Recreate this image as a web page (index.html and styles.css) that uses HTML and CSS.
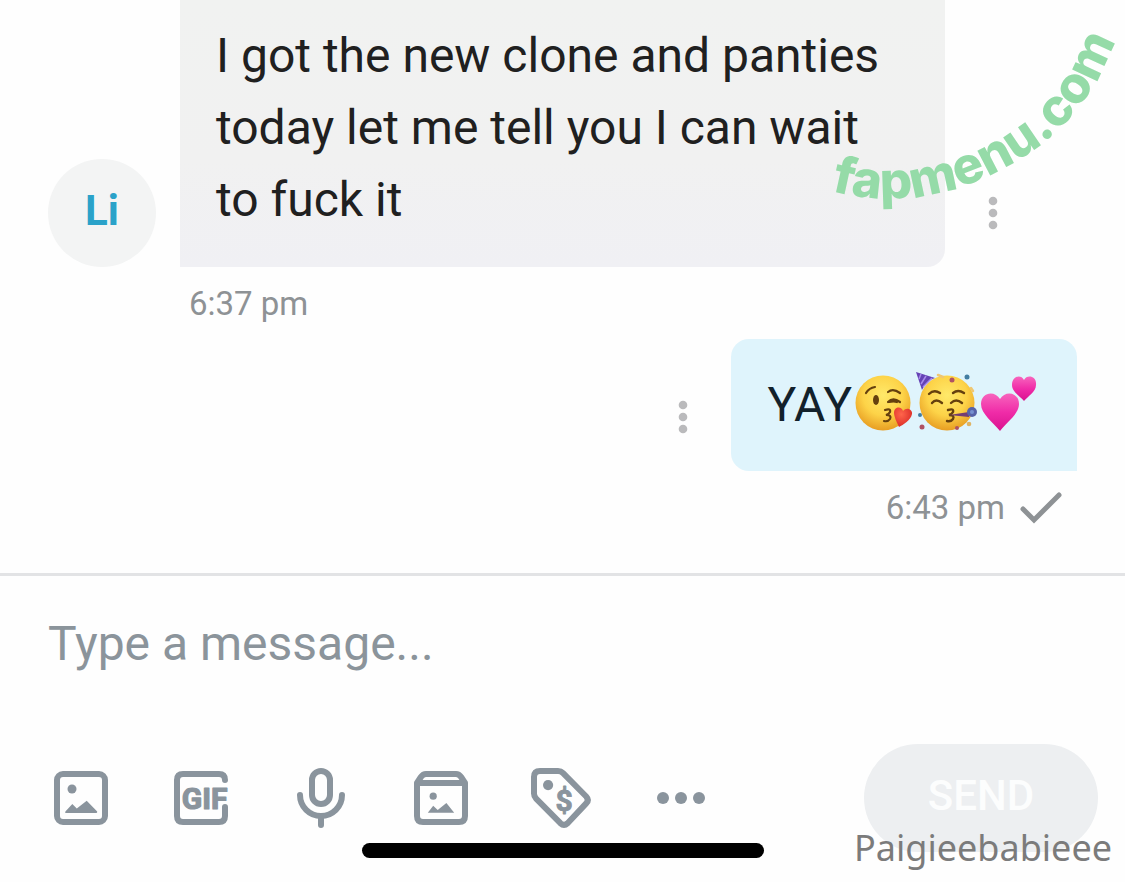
FILE: index.html
```html
<!DOCTYPE html>
<html lang="en">
<head>
<meta charset="utf-8">
<meta name="viewport" content="width=device-width, initial-scale=1">
<title>Messages</title>
<link rel="stylesheet" href="styles.css">
</head>
<body>
<main class="chat">
  <section class="thread">
    <article class="message">
      <div class="message-row">
        <div class="avatar">Li</div>
        <p class="bubble bubble-in">I got the new clone and panties today let me tell you I can wait to fuck it</p>
        <button class="more" type="button" aria-label="Message options">
          <svg width="36" height="36" viewBox="0 0 36 36"><circle cx="18" cy="6" r="4.300"/><circle cx="18" cy="18" r="4.300"/><circle cx="18" cy="30" r="4.300"/></svg>
        </button>
      </div>
      <div class="meta meta-in"><time>6:37 pm</time></div>
    </article>
    <article class="message">
      <div class="message-row message-row-out">
        <button class="more" type="button" aria-label="Message options">
          <svg width="36" height="36" viewBox="0 0 36 36"><circle cx="18" cy="6" r="4.300"/><circle cx="18" cy="18" r="4.300"/><circle cx="18" cy="30" r="4.300"/></svg>
        </button>
        <p class="bubble bubble-out"><span>YAY</span>
          <svg class="emoji" viewBox="0 0 63 63" role="img" aria-label="Face blowing a kiss">
            <defs>
              <radialGradient id="face" cx=".5" cy=".36" r=".66"><stop offset="0" stop-color="#ffe96a"/><stop offset=".55" stop-color="#fdd348"/><stop offset="1" stop-color="#e69a20"/></radialGradient>
              <linearGradient id="pink" x2="0" y2="1"><stop offset="0" stop-color="#f765bd"/><stop offset=".5" stop-color="#f02ca8"/><stop offset="1" stop-color="#d9128f"/></linearGradient>
              <radialGradient id="red" cx=".4" cy=".35" r=".7"><stop offset="0" stop-color="#ff654b"/><stop offset="1" stop-color="#d92a25"/></radialGradient>
            </defs>
            <circle cx="31" cy="32" r="27.500" fill="url(#face)"/>
            <g fill="none" stroke="#65400e" stroke-width="2.200" stroke-linecap="round">
              <path d="M14 22Q17 17 23 16M36 21Q41 17 48 22M36 31Q41 26 48 31M37 31Q42 30 45 31"/>
              <path d="M33 39Q39 37 38 41Q37 43 34 44Q40 44 38 48Q36 51 32 50"/>
            </g>
            <ellipse cx="24" cy="29" rx="3" ry="5" fill="#65400e"/>
            <path d="M47 56Q42 46 42 42C42 35 50 35 51 40C55 35 61 39 60 43C59 49 51 54 47 56Z" fill="url(#red)"/>
          </svg>
          <svg class="emoji" viewBox="0 0 63 63" role="img" aria-label="Partying face">
            <circle cx="32" cy="32" r="27.500" fill="url(#face)"/>
            <g fill="none" stroke="#65400e" stroke-width="2.400" stroke-linecap="round">
              <path d="M14 23Q19 18 25 22M38 22Q43 18 49 22M17 32Q21 27 27 32M36 32Q41 27 47 32"/>
              <path d="M33 39Q39 37 38 41Q37 43 34 44Q40 44 38 48Q36 51 32 50"/>
            </g>
            <path d="M1 1L20 7Q12 9 7 19Z" fill="#6542b5"/>
            <path d="M6 3L4 8M11 5L6 13M17 7L8 16" stroke="#a88bea" stroke-width="1.500"/>
            <path d="M34 44L54 41V46Z" fill="#743d72"/><circle cx="57" cy="41" r="5" fill="#5763a8"/><circle cx="57" cy="41" r="2" fill="#7790cf"/>
            <g fill="#af5263"><circle cx="37" cy="9" r="2.500"/><circle cx="7" cy="56" r="2.500"/><circle cx="42" cy="57" r="2"/></g>
            <g fill="#427da1"><circle cx="52" cy="6" r="2.500"/><circle cx="5" cy="44" r="2"/></g>
            <path d="M23 4L28 6M56 17L58 20" stroke="#efc773" stroke-width="2.500" stroke-linecap="round"/><circle cx="54" cy="53" r="2.300" fill="#dfb464"/>
          </svg>
          <svg class="emoji" viewBox="0 0 63 63" role="img" aria-label="Two hearts">
            <path d="M22 60C15 51 3 43 3 33C3 21 17 19 22 28C27 19 41 21 41 33C41 43 29 51 22 60Z" fill="url(#pink)"/>
            <path d="M46 30C42 25 34 21 34 14C34 5 43 3 46 9C49 3 59 5 58 14C58 21 50 25 46 30Z" fill="url(#pink)"/>
          </svg>
        </p>
      </div>
      <div class="meta meta-out"><time>6:43 pm</time>
        <svg class="check" viewBox="0 0 42 32" role="img" aria-label="Sent"><path d="M3 17L14 28L39 3"/></svg>
      </div>
    </article>
  </section>
  <form class="composer">
    <textarea class="entry" rows="1" aria-label="Message" placeholder="Type a message..."></textarea>
    <div class="toolbar">
      <div class="tools">
        <button class="tool" type="button" aria-label="Add photo"><svg viewBox="0 0 24 24"><rect class="line" x="4" y="4" width="16" height="16" rx="2"/><circle cx="9" cy="9" r="1.500"/><path d="M7 17Q6.500 17 6.800 16.500L9.100 14L10.600 15.500L13.900 12.900L17.400 16.500Q17.500 17 17 17Z"/></svg></button>
        <button class="tool" type="button" aria-label="Add GIF"><svg viewBox="0 0 24 24"><path class="line" d="M20 6Q20 4 18 4H6Q4 4 4 6V18Q4 20 6 20H18Q20 20 20 18V15"/><text class="gif" x="5.600" y="15.600">GIF</text></svg></button>
        <button class="tool" type="button" aria-label="Record voice"><svg viewBox="0 0 24 24"><rect class="line" x="9" y="3" width="6" height="11" rx="3"/><path class="line" d="M5 11a7 7 0 0 0 14 0M12 18V21"/></svg></button>
        <button class="tool" type="button" aria-label="Open vault"><svg viewBox="0 0 24 24"><path class="line" d="M4 7V18Q4 20 6 20H18Q20 20 20 18V7L18.700 5Q18 4 17 4H7Q6 4 5.300 5ZM4 7H20"/><circle cx="9.400" cy="11.400" r="1.200"/><path d="M7.600 16.900L9.400 14.600L10.900 16L13.800 13.700L16.400 16.900Z"/></svg></button>
        <button class="tool" type="button" aria-label="Set price"><svg viewBox="0 0 24 24"><path class="line" d="M5 3H11Q12 3 12.700 3.700L20.400 11.500Q21.500 12.700 20.400 13.800L14.200 20.400Q13 21.500 11.800 20.400L3.700 12.200Q3 11.500 3 10.500V5Q3 3 5 3Z"/><circle cx="7.700" cy="7.700" r="1.700"/><text class="price" x="13" y="16.200">$</text></svg></button>
        <button class="tool" type="button" aria-label="More tools"><svg viewBox="0 0 24 24"><circle cx="6" cy="12" r="2"/><circle cx="12" cy="12" r="2"/><circle cx="18" cy="12" r="2"/></svg></button>
      </div>
      <button class="send" type="submit" disabled>SEND</button>
    </div>
  </form>
  <svg class="site-mark" width="305" height="230" viewBox="0 0 305 230">
    <path id="arc" fill="none" d="M11 191C80 209 140 193 190 165S286 92 306 2"/>
    <text><textPath href="#arc">fapmenu.com</textPath></text>
  </svg>
  <div class="home-bar"></div>
  <div class="name-mark">Paigieebabieee</div>
</main>
</body>
</html>
```
FILE: styles.css
```css
* { box-sizing: border-box; }
body { margin: 0; background: #fefefe; font-family: Roboto, sans-serif; }
button { border: 0; padding: 0; background: none; font: inherit; }
svg { display: block; }
.chat { position: relative; min-height: 100vh; overflow: hidden; }
.thread { padding: 0 48px 30px; }
.message-row { display: flex; align-items: flex-end; }
.message-row-out { justify-content: flex-end; }
.avatar {
  display: grid; place-items: center; flex: none;
  width: 108px; height: 108px; margin-right: 24px;
  border-radius: 50%; background: #f3f4f4;
  color: #2aa2c9; font-size: 42px; font-weight: 700; line-height: 48px; padding-bottom: 4px;
}
.bubble { margin: 0; font-size: 48px; line-height: 72px; }
.bubble-in {
  flex: 0 1 765px; padding: 20px 36px 31px;
  border-radius: 0 0 18px 0;
  background: linear-gradient(#f1f2f1, #f1f1f1 60%, #f0f0f4); color: #202020;
}
.bubble-out {
  display: flex; align-items: flex-start; padding: 30px 36px;
  border-radius: 18px 18px 0 18px;
  background: #dff4fc; color: #12212b;
}
.emoji { width: 63px; height: 63px; margin-top: 2px; }
.more { display: grid; place-items: center; flex: none; width: 96px; height: 108px; }
.more svg { fill: #bababc; }
.meta { display: flex; align-items: center; height: 72px; padding-top: 2px; color: #8e9295; font-size: 33px; line-height: 36px; }
.meta-in { padding-left: 141px; }
.meta-out { justify-content: flex-end; gap: 15px; padding-right: 15px; }
.check { width: 42px; height: 32px; fill: none; stroke: #8e9295; stroke-width: 5; stroke-linecap: round; }
.composer { border-top: 3px solid #e2e3e5; }
.entry {
  display: block; width: 100%; height: 168px; padding: 32px 48px;
  border: 0; outline: 0; resize: none; background: transparent;
  color: #202020; font: 48px/72px Roboto, sans-serif;
}
.entry::placeholder { color: #8b949b; opacity: 1; }
.toolbar { display: flex; align-items: center; justify-content: space-between; padding: 0 27px 30px 45px; }
.tools { display: flex; gap: 48px; }
.tool svg { width: 72px; height: 72px; fill: #8a949d; }
.tool .line { fill: none; stroke: #8a949d; stroke-width: 2; stroke-linecap: round; stroke-linejoin: round; }
.tool text { font-family: Roboto, sans-serif; font-weight: 700; stroke: #8a949d; stroke-linejoin: round; }
.gif { font-size: 10px; stroke-width: .4px; }
.price { font-size: 10px; stroke-width: .3px; text-anchor: middle; }
.send {
  width: 234px; height: 108px; padding-bottom: 6px; border-radius: 54px;
  background: #edeff1; color: #fcfdfd; font-size: 42px; font-weight: 500;
}
.site-mark { position: absolute; top: 0; right: 0; overflow: visible; pointer-events: none; }
.site-mark text { font: 800 51px Inter, sans-serif; fill: #95dba8; }
.home-bar {
  position: absolute; bottom: 24px; left: 50%; width: 402px; height: 15px;
  transform: translateX(-50%); border-radius: 8px; background: #000;
}
.name-mark {
  position: absolute; right: 13px; bottom: 14px;
  color: #7b7b7b; font: 36px/40px "Noto Sans", sans-serif;
}
```
